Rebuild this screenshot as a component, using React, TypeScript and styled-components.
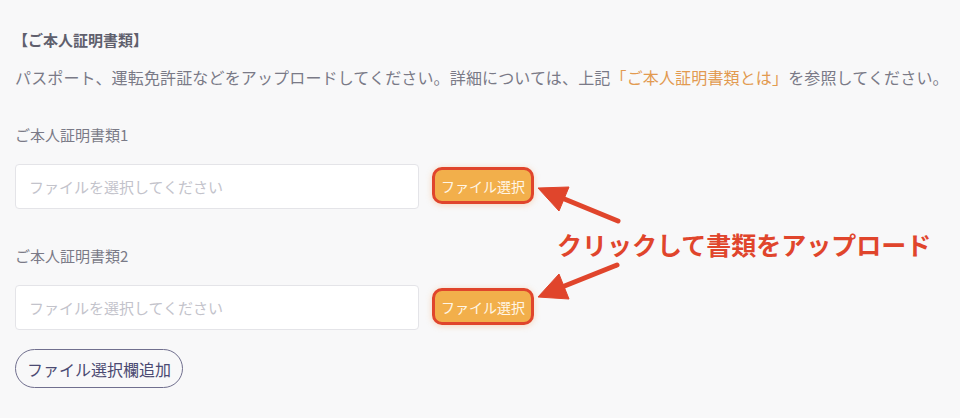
import * as React from "react";
import styled, { createGlobalStyle } from "styled-components";

const colors = {
  page: "#f8f8f9",
  heading: "#5f5f6d",
  text: "#7a7a87",
  link: "#e29a50",
  placeholder: "#c3c3cb",
  inputBorder: "#e4e4e8",
  red: "#e0452c",
  orange: "#f2af4b",
  navy: "#4b4a72",
  navyBorder: "#706f8e",
};

const GlobalStyle = createGlobalStyle`
  body {
    margin: 0;
    background: ${colors.page};
    font-family: "Noto Sans CJK JP", "Noto Sans", sans-serif;
  }
`;

const Page = styled.div`
  position: relative;
  width: 960px;
  height: 418px;
  padding: 29px 15px 0;
  box-sizing: border-box;
  overflow: hidden;
`;

const Heading = styled.div`
  font-size: 15px;
  line-height: 22px;
  font-weight: 700;
  color: ${colors.heading};
  margin-left: -2px;
`;

const Description = styled.p`
  margin: 14px 0 0;
  font-size: 16px;
  line-height: 24px;
  color: ${colors.text};
  white-space: nowrap;
  letter-spacing: 0.15px;
`;

const Link = styled.span`
  color: ${colors.link};
`;

const Fields = styled.div`
  display: flex;
  flex-direction: column;
  gap: 36px;
  margin-top: 35px;
`;

const Field = styled.div`
  display: flex;
  flex-direction: column;
  gap: 18px;
`;

const Label = styled.label`
  font-size: 15px;
  line-height: 22px;
  color: ${colors.text};
`;

const Row = styled.div`
  display: flex;
  align-items: center;
  gap: 13px;
`;

const FileInput = styled.input`
  width: 404px;
  height: 45px;
  box-sizing: border-box;
  padding: 0 13px;
  border: 1px solid ${colors.inputBorder};
  border-radius: 4px;
  background: #fff;
  font-family: inherit;
  font-size: 15px;
  color: ${colors.text};
  outline: none;
  &::placeholder {
    color: ${colors.placeholder};
  }
`;

const SelectButton = styled.button`
  height: 37px;
  padding: 0 6px;
  border: 3.5px solid ${colors.red};
  border-radius: 10px;
  background: ${colors.orange};
  box-shadow: 0 1px 6px rgba(240, 150, 70, 0.35);
  font-family: inherit;
  font-size: 14px;
  line-height: 1;
  color: #fff6e6;
  margin-top: -2px;
`;

const AddButton = styled.button`
  margin-top: 19px;
  height: 39px;
  padding: 0 11px;
  border: 1.5px solid ${colors.navyBorder};
  border-radius: 20px;
  background: transparent;
  font-family: inherit;
  font-size: 16px;
  line-height: 1;
  color: ${colors.navy};
`;

const Overlay = styled.svg`
  position: absolute;
  inset: 0;
  pointer-events: none;
`;

const Callout = styled.div`
  position: absolute;
  left: 557px;
  top: 229px;
  font-size: 25px;
  line-height: 30px;
  font-weight: 700;
  color: ${colors.red};
  white-space: nowrap;
`;

const Arrow = ({
  line,
  head,
}: {
  line: [number, number, number, number];
  head: string;
}) => (
  <g fill={colors.red} stroke={colors.red}>
    <line
      x1={line[0]}
      y1={line[1]}
      x2={line[2]}
      y2={line[3]}
      strokeWidth={5}
      strokeLinecap="round"
    />
    <polygon points={head} strokeWidth={1} strokeLinejoin="round" />
  </g>
);

const fields = ["ご本人証明書類1", "ご本人証明書類2"];

export default function App() {
  return (
    <Page>
      <GlobalStyle />
      <Heading>【ご本人証明書類】</Heading>
      <Description>
        パスポート、運転免許証などをアップロードしてください。詳細については、上記
        <Link>「ご本人証明書類とは」</Link>を参照してください。
      </Description>
      <Fields>
        {fields.map((label) => (
          <Field key={label}>
            <Label>{label}</Label>
            <Row>
              <FileInput readOnly placeholder="ファイルを選択してください" />
              <SelectButton>ファイル選択</SelectButton>
            </Row>
          </Field>
        ))}
      </Fields>
      <AddButton>ファイル選択欄追加</AddButton>

      <Overlay width={960} height={418} viewBox="0 0 960 418">
        <Arrow line={[618, 221, 562, 198]} head="538,188 569,187 559,211" />
        <Arrow line={[617, 265, 562, 287]} head="538,297 569,299 559,274" />
      </Overlay>
      <Callout>クリックして書類をアップロード</Callout>
    </Page>
  );
}
